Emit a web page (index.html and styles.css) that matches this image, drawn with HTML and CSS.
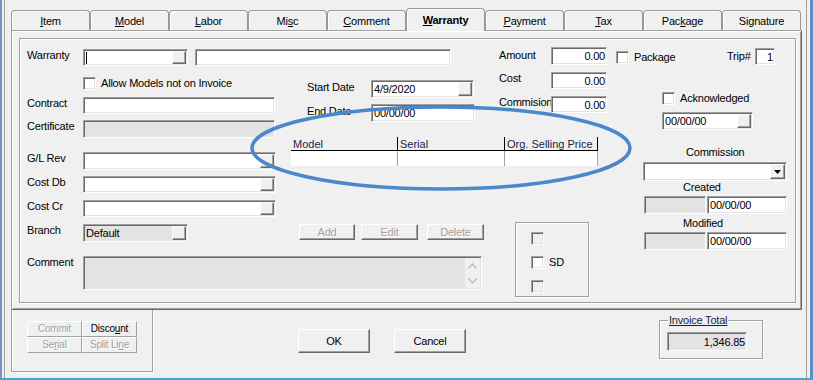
FILE: index.html
```html
<!DOCTYPE html>
<html>
<head>
<meta charset="utf-8">
<title>Warranty</title>
<link rel="stylesheet" href="styles.css">
</head>
<body>
<div class="win">
 <div class="client">
  <div class="tabs">
   <div class="tab"><span><u>I</u>tem</span></div>
   <div class="tab"><span><u>M</u>odel</span></div>
   <div class="tab"><span><u>L</u>abor</span></div>
   <div class="tab"><span>Mi<u>s</u>c</span></div>
   <div class="tab"><span><u>C</u>omment</span></div>
   <div class="tab sel"><span><u>W</u>arranty</span></div>
   <div class="tab"><span><u>P</u>ayment</span></div>
   <div class="tab"><span><u>T</u>ax</span></div>
   <div class="tab"><span>Pac<u>k</u>age</span></div>
   <div class="tab"><span>Signature</span></div>
  </div>
  <div class="page">
   <div class="group">
    <div class="col col-a">
     <div class="row a1"><div class="lbl la">Warranty</div><div class="fld w105"><span class="caret"></span><span class="fbtn"></span></div><div class="fld w256 ml7"></div></div>
     <div class="row a2"><span class="chk"></span><span class="ctxt">Allow Models not on Invoice</span></div>
     <div class="row a3"><div class="lbl la">Contract</div><div class="fld w192"></div></div>
     <div class="row a4"><div class="lbl la">Certificate</div><div class="fld w192 h18 dis"></div></div>
     <div class="row a5"><div class="lbl la">G/L Rev</div><div class="fld w193 h18"><span class="fbtn"></span></div></div>
     <div class="row a6"><div class="lbl la">Cost Db</div><div class="fld w193"><span class="fbtn"></span></div></div>
     <div class="row a7"><div class="lbl la">Cost Cr</div><div class="fld w193"><span class="fbtn"></span></div></div>
     <div class="row a8"><div class="lbl la">Branch</div><div class="fld w105 h18 dis"><span>Default</span><span class="fbtn"></span></div></div>
     <div class="row a9"><div class="lbl la">Comment</div>
      <div class="memo">
       <div class="sb">
        <svg width="9" height="6" viewBox="0 0 9 6"><polyline points="0.5,5.5 4.5,1 8.5,5.5"/></svg>
        <svg width="9" height="6" viewBox="0 0 9 6"><polyline points="0.5,0.5 4.5,5 8.5,0.5"/></svg>
       </div>
      </div>
     </div>
    </div>
    <div class="col col-b">
     <div class="row b1"><div class="lbl lb mt1">Start Date</div><div class="fld w103 h18"><span>4/9/2020</span><span class="fbtn"></span></div></div>
     <div class="row b2"><div class="lbl lb mt1">End Date</div><div class="fld w104 h18"><span>00/00/00</span></div></div>
     <div class="grid">
      <div class="gh"><div class="gc g1">Model</div><div class="gc g2">Serial</div><div class="gc g3">Org. Selling Price</div></div>
      <div class="gr"><div class="gc g1"></div><div class="gc g2"></div><div class="gc g3"></div></div>
     </div>
     <div class="row b4"><div class="btn dis w56">Add</div><div class="btn dis w57 ml6">Edit</div><div class="btn dis w57 ml9">Delete</div></div>
    </div>
    <div class="col col-c">
     <div class="row c1"><div class="lbl lc mt2">Amount</div><div class="fld num w56 h18">0.00</div><span class="chk ml9 mt4"></span><span class="ctxt mt4">Package</span></div>
     <div class="row c2"><div class="lbl lc">Cost</div><div class="fld num w56">0.00</div></div>
     <div class="row c3"><div class="lbl lc">Commision</div><div class="fld num w56">0.00</div></div>
     <div class="cbgroup">
      <span class="chk dis"></span>
      <div class="row cbr"><span class="chk"></span><span class="ctxt">SD</span></div>
      <span class="chk dis cbl"></span>
     </div>
    </div>
    <div class="col col-d">
     <div class="row d1"><div class="lbl ltrip mt2">Trip#</div><div class="fld num trip">1</div></div>
     <div class="row d2"><span class="chk"></span><span class="ctxt">Acknowledged</span></div>
     <div class="row d3"><div class="fld w91 h18"><span>00/00/00</span><span class="fbtn"></span></div></div>
     <div class="lbl cap d4">Commission</div>
     <div class="combo"><span class="ddbtn"><svg width="7" height="4" viewBox="0 0 7 4"><polygon points="0,0 7,0 3.5,4"/></svg></span></div>
     <div class="lbl cap d6">Created</div>
     <div class="row d7"><div class="fld dis w62 h18"></div><div class="fld w80 h18 ml1"><span>00/00/00</span></div></div>
     <div class="lbl cap d6 d8">Modified</div>
     <div class="row d7"><div class="fld dis w62 h18"></div><div class="fld w80 h18 ml1"><span>00/00/00</span></div></div>
    </div>
   </div>
  </div>
  <div class="bottom">
   <div class="cmdbox">
    <div class="cmdgrid">
     <div class="sbtn dis">Commit</div>
     <div class="sbtn">Disco<u>u</u>nt</div>
     <div class="sbtn dis">Se<u>r</u>ial</div>
     <div class="sbtn dis">Split Li<u>n</u>e</div>
    </div>
   </div>
   <div class="btn big okb">OK</div>
   <div class="btn big cancelb">Cancel</div>
   <div class="inv">
    <span class="invl">Invoice Total</span>
    <div class="fld dis num invf">1,346.85</div>
   </div>
  </div>
 </div>
</div>
<svg class="annot" width="813" height="380" viewBox="0 0 813 380"><ellipse cx="441" cy="148" rx="189" ry="41" fill="none" stroke="#4a87cb" stroke-width="3.5"/></svg>
</body>
</html>
```
FILE: styles.css
```css
* { box-sizing: border-box; }
html, body { margin: 0; padding: 0; }
body {
  position: relative;
  width: 813px;
  height: 380px;
  overflow: hidden;
  background: #f0f0f0;
  font-family: "Liberation Sans", Arial, sans-serif;
  font-size: 11px;
  line-height: 12px;
  letter-spacing: -0.2px;
  color: #000;
}
u { text-underline-offset: 1px; }

.win {
  width: 813px;
  height: 380px;
  border-left: 2px solid #7495c0;
  border-right: 3px solid #5b8fcc;
  border-bottom: 2px solid #3fa6d8;
  background: #f0f0f0;
}
.client {
  margin-left: 2px;
  width: 803px;
  height: 378px;
  border-left: 1px solid #a0a0a0;
  border-right: 1px solid #a0a0a0;
  padding: 8px 0 0 6px;
}

/* tabs */
.tabs {
  position: relative;
  z-index: 1;
  display: flex;
  align-items: flex-end;
  height: 22px;
}
.tab {
  flex: 0 0 79px;
  height: 20px;
  border: 1px solid #989898;
  border-bottom: none;
  border-radius: 4px 4px 0 0;
  background: #f0f0f0;
  box-shadow: inset 1px 1px 0 #fff;
  display: flex;
  align-items: center;
  justify-content: center;
  white-space: nowrap;
}
.tab.sel {
  height: 23px;
  margin-bottom: -1px;
  font-weight: bold;
}

.page {
  width: 791px;
  height: 280px;
  border: 1px solid #a0a0a0;
  border-right-color: #696969;
  border-bottom-color: #696969;
  box-shadow: inset 1px 1px 0 #fff, inset -1px -1px 0 #a0a0a0;
  padding: 7px 0 0 7px;
}
.group {
  display: flex;
  width: 777px;
  height: 265px;
  border: 1px solid #a0a0a0;
  box-shadow: inset 1px 1px 0 #fff, 1px 1px 0 #fff;
}
.col { display: flex; flex-direction: column; flex-shrink: 0; }
.col-a { width: 270px; padding-left: 7px; }
.col-b { width: 208px; }
.col-c { width: 142px; }
.col-d { flex: 1 0 0; }

.row { display: flex; align-items: flex-start; flex-shrink: 0; white-space: nowrap; }
.lbl { flex-shrink: 0; white-space: nowrap; }
.la { width: 56px; }
.lb { width: 64px; }
.lc { width: 52px; }
.ltrip { width: 28px; }
.cap { align-self: flex-start; }

.mt1 { margin-top: 1px; }
.mt2 { margin-top: 2px; }
.mt4 { margin-top: 4px; }
.ml1 { margin-left: 1px; }
.ml6 { margin-left: 6px; }
.ml7 { margin-left: 7px; }
.ml9 { margin-left: 9px; }

/* sunken field */
.fld {
  flex-shrink: 0;
  display: flex;
  align-items: center;
  height: 17px;
  padding: 1px 1px 1px 2px;
  background: #fff;
  border: 1px solid;
  border-color: #a0a0a0 #fff #fff #a0a0a0;
  box-shadow: inset 1px 1px 0 #696969, inset -1px -1px 0 #e3e3e3;
  white-space: nowrap;
  overflow: hidden;
}
.fld.h18 { height: 18px; }
.fld.dis { background: #e3e3e3; }
.fld.num { justify-content: flex-end; padding-right: 1px; }
.w56 { width: 56px; }
.w57 { width: 57px; }
.w62 { width: 62px; }
.w80 { width: 80px; }
.w91 { width: 91px; }
.w103 { width: 103px; }
.w104 { width: 104px; }
.w105 { width: 105px; }
.w192 { width: 192px; }
.w193 { width: 193px; }
.w256 { width: 256px; }

.fbtn {
  margin-left: auto;
  flex-shrink: 0;
  width: 14px;
  height: 100%;
  background: #f0f0f0;
  border: 1px solid;
  border-color: #fff #696969 #696969 #fff;
  box-shadow: inset -1px -1px 0 #a0a0a0;
}
.caret { width: 1px; height: 12px; background: #000; flex-shrink: 0; }

/* checkbox */
.chk {
  flex-shrink: 0;
  width: 13px;
  height: 13px;
  background: #fff;
  border: 1px solid;
  border-color: #a0a0a0 #fff #fff #a0a0a0;
  box-shadow: inset 1px 1px 0 #696969, inset -1px -1px 0 #e3e3e3;
}
.chk.dis { background: #f0f0f0; }
.ctxt { margin-left: 5px; }

/* column A rows */
.a1 { margin-top: 10px; }
.a2 { margin-top: 11px; padding-left: 56px; }
.a3 { margin-top: 7px; }
.a4 { margin-top: 6px; }
.a5 { margin-top: 14px; }
.a6 { margin-top: 6px; }
.a7 { margin-top: 7px; }
.a8 { margin-top: 7px; }
.a9 { margin-top: 14px; }

.memo {
  flex-shrink: 0;
  width: 399px;
  height: 34px;
  display: flex;
  justify-content: flex-end;
  padding: 1px;
  background: #e3e3e3;
  border: 1px solid;
  border-color: #a0a0a0 #fff #fff #a0a0a0;
  box-shadow: inset 1px 1px 0 #696969, inset -1px -1px 0 #e3e3e3;
}
.sb {
  width: 15px;
  height: 100%;
  background: #f0f0f0;
  display: flex;
  flex-direction: column;
  align-items: center;
  justify-content: space-between;
  padding: 5px 0 4px;
}
.sb polyline { fill: none; stroke: #b9b9b9; stroke-width: 1.2; }

/* column B */
.b1 { margin-top: 41px; padding-left: 17px; }
.b2 { margin-top: 6px; padding-left: 17px; }
.grid { margin: 15px 0 0 1px; width: 307px; flex-shrink: 0; }
.gh { display: flex; height: 14px; border-bottom: 1px solid #000; color: #1c1c4e; }
.gr { display: flex; height: 15px; background: #fff; }
.gc { flex-shrink: 0; padding: 1px 0 0 2px; white-space: nowrap; letter-spacing: 0; }
.gh .gc { border-right: 1px solid #000; }
.gr .gc { border-right: 1px solid #a0a0a0; }
.g1 { width: 107px; }
.g2 { width: 107px; }
.g3 { width: 93px; }
.b4 { margin-top: 58px; padding-left: 9px; }

/* raised buttons */
.btn {
  flex-shrink: 0;
  height: 16px;
  display: flex;
  align-items: center;
  justify-content: center;
  background: #f0f0f0;
  border: 1px solid;
  border-color: #fff #696969 #696969 #fff;
  box-shadow: inset -1px -1px 0 #a0a0a0;
}
.btn.dis, .sbtn.dis { color: #a0a0a0; text-shadow: 1px 1px 0 #fff; }

/* column C */
.c1 { margin-top: 8px; padding-left: 1px; }
.c2 { margin-top: 7px; padding-left: 1px; }
.c3 { margin-top: 7px; padding-left: 1px; }
.cbgroup {
  margin: 109px 0 0 17px;
  width: 74px;
  height: 75px;
  border: 1px solid #a0a0a0;
  box-shadow: inset 1px 1px 0 #fff, 1px 1px 0 #fff;
  padding: 9px 0 0 15px;
  display: flex;
  flex-direction: column;
  align-items: flex-start;
}
.cbr { margin-top: 11px; }
.cbl { margin-top: 11px; }

/* column D */
.d1 { margin-top: 9px; padding-left: 87px; }
.trip { width: 20px; padding-right: 3px; }
.d2 { margin-top: 27px; padding-left: 22px; }
.d3 { margin-top: 7px; padding-left: 22px; }
.d4 { margin: 16px 0 0 46px; }
.combo {
  flex-shrink: 0;
  margin: 4px 0 0 3px;
  width: 144px;
  height: 19px;
  display: flex;
  justify-content: flex-end;
  padding: 1px;
  background: #fff;
  border: 1px solid;
  border-color: #a0a0a0 #fff #fff #a0a0a0;
  box-shadow: inset 1px 1px 0 #696969, inset -1px -1px 0 #e3e3e3;
}
.ddbtn {
  width: 15px;
  height: 100%;
  display: flex;
  align-items: center;
  justify-content: center;
  background: #f0f0f0;
  border: 1px solid;
  border-color: #fff #696969 #696969 #fff;
  box-shadow: inset -1px -1px 0 #a0a0a0;
}
.ddbtn svg { fill: #000; }
.d6 { margin: 0 0 0 43px; }
.d7 { margin-top: 3px; padding-left: 4px; }
.d8 { margin-top: 3px; }

/* bottom */
.bottom { display: flex; align-items: flex-start; height: 68px; }
.cmdbox {
  flex-shrink: 0;
  width: 142px;
  height: 62px;
  border: 1px solid #a0a0a0;
  border-top: none;
  box-shadow: inset 1px 0 0 #fff, 1px 1px 0 #fff;
  padding: 11px 0 0 15px;
}
.cmdgrid {
  display: grid;
  grid-template-columns: 55px 55px;
  grid-auto-rows: 16px;
}
.sbtn {
  display: flex;
  align-items: center;
  justify-content: center;
  font-size: 10px;
  border: 1px solid;
  border-color: #fff #a0a0a0 #a0a0a0 #fff;
  white-space: nowrap;
}
.big { width: 72px; height: 24px; margin-top: 19px; }
.okb { margin-left: 145px; }
.cancelb { margin-left: 24px; }
.inv {
  flex-shrink: 0;
  margin: 10px 0 0 193px;
  width: 104px;
  height: 39px;
  border: 1px solid #a0a0a0;
  box-shadow: inset 1px 1px 0 #fff, 1px 1px 0 #fff;
  padding-left: 7px;
  display: flex;
  flex-direction: column;
  align-items: flex-start;
}
.invl {
  margin: -7px 0 0 1px;
  padding: 0 1px;
  background: #f0f0f0;
  color: #1c1c4e;
  text-decoration: underline;
  text-underline-offset: 1px;
}
.invf { margin-top: 6px; width: 80px; height: 19px; }

.annot { position: absolute; left: 0; top: 0; pointer-events: none; }
```
